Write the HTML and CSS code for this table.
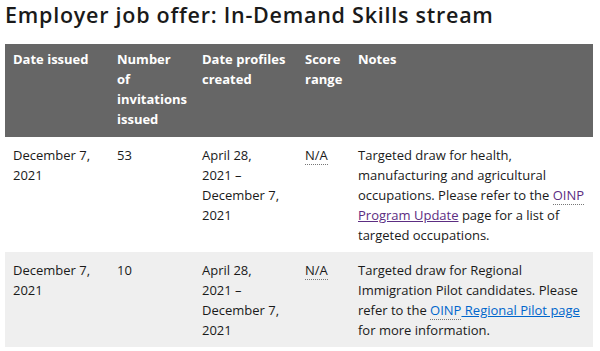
FILE: index.html
```html
<!DOCTYPE html>
<html lang="en">
<head>
<meta charset="utf-8">
<link rel="stylesheet" href="styles.css">
</head>
<body>
<h2 class="title">Employer job offer: In-Demand Skills stream</h2>
<table class="draws">
  <colgroup>
    <col class="c1"><col class="c2"><col class="c3"><col class="c4"><col class="c5">
  </colgroup>
  <thead>
    <tr>
      <th>Date issued</th>
      <th>Number of invitations issued</th>
      <th>Date profiles created</th>
      <th>Score range</th>
      <th>Notes</th>
    </tr>
  </thead>
  <tbody>
    <tr>
      <td>December 7, 2021</td>
      <td>53</td>
      <td>April 28, 2021&nbsp;– December 7, 2021</td>
      <td><abbr class="na" title="Not applicable">N/A</abbr></td>
      <td>Targeted draw for health, manufacturing and agricultural occupations. Please refer to the <a class="visited" href="#"><abbr class="ab" title="Ontario Immigrant Nominee Program">OINP</abbr> Program Update</a> page for a list of targeted occupations.</td>
    </tr>
    <tr class="alt">
      <td>December 7, 2021</td>
      <td>10</td>
      <td>April 28, 2021&nbsp;– December 7, 2021</td>
      <td><abbr class="na" title="Not applicable">N/A</abbr></td>
      <td>Targeted draw for Regional Immigration Pilot candidates. Please refer to the <a class="link" href="#"><abbr class="ab" title="Ontario Immigrant Nominee Program">OINP</abbr> Regional Pilot page</a> for more information.</td>
    </tr>
  </tbody>
</table>
</body>
</html>
```
FILE: styles.css
```css
html, body {
  margin: 0;
  padding: 0;
  background: #fff;
}
body {
  padding: 0 5px;
  font-family: "Open Sans", "Noto Sans", sans-serif;
  font-size: 13px;
  line-height: 20px;
  color: #1a1a1a;
}
.title {
  margin: 0;
  padding-top: 2px;
  height: 42px;
  font-family: "Open Sans", "Noto Sans", sans-serif;
  font-weight: 600;
  font-size: 21.5px;
  line-height: 26px;
  color: #1a1a1a;
  letter-spacing: 0.75px;
}
.draws {
  width: 588px;
  border-collapse: collapse;
  table-layout: fixed;
}
.c1 { width: 104px; }
.c2 { width: 85px; }
.c3 { width: 103px; }
.c4 { width: 53px; }
.c5 { width: 243px; }
.draws th {
  background: #666;
  color: #fff;
  font-weight: 700;
  text-align: left;
  vertical-align: top;
  padding: 5px 8px 8px 8px;
}
.draws td {
  vertical-align: top;
  padding: 8px 8px 7px 8px;
}
.draws tr.alt td {
  background: #efefef;
}
abbr.na {
  text-decoration: none;
  border-bottom: 1px dotted #777;
}
abbr.ab {
  display: inline-block;
  line-height: 18px;
  text-decoration: none;
  border-bottom: 1px dotted #777;
}
a.visited {
  color: #5c2d82;
  text-decoration: underline;
}
a.link {
  color: #0066cc;
  text-decoration: underline;
}
```
